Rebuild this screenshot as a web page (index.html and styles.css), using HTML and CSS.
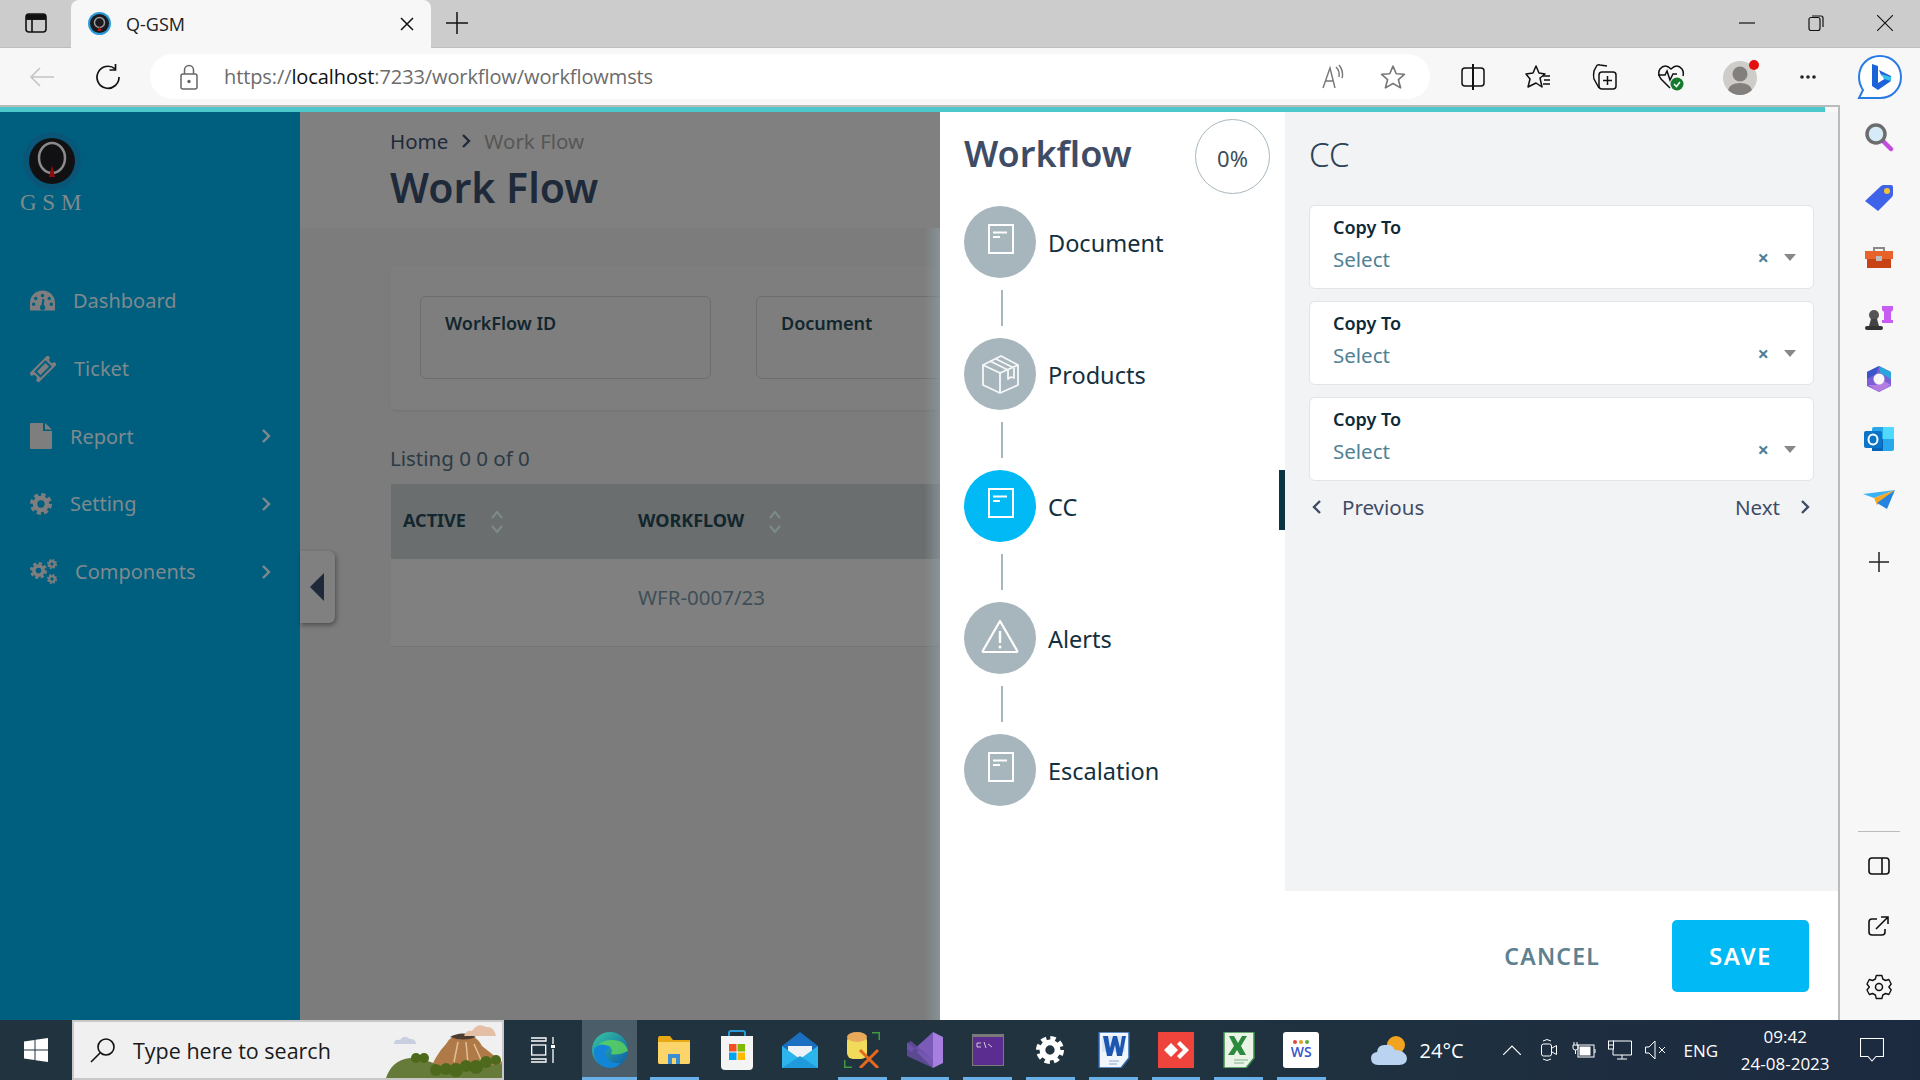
FILE: index.html
```html
<!DOCTYPE html>
<html lang="en">
<head>
    <meta charset="UTF-8">
    <title>Q-GSM</title>
    <link rel="stylesheet" href="styles.css">
</head>
<body>
    <svg class="sprites" width="0" height="0">
        <symbol id="doc" viewBox="0 0 72 72">
            <rect x="25" y="19" width="24" height="28" fill="none" stroke="#fff" stroke-width="2"/>
            <path d="M29 26.5h14M29 31h7" stroke="#fff" stroke-width="2" fill="none"/>
        </symbol>
        <symbol id="box" viewBox="0 0 72 72">
            <g fill="none" stroke="#fff" stroke-width="1.8" stroke-linejoin="round" opacity=".9">
                <path d="M19 27 36 35 54 27V47L36 55 19 47Z"/>
                <path d="M19 27 37 18 54 27M36 35V55"/>
                <path d="M26 23 44 32M31 20.5 49 29.500M44 32V41L47 39 50 40V30"/>
            </g>
        </symbol>
        <symbol id="alert" viewBox="0 0 72 72">
            <path d="M36 19 53 48.500Q54 50 52 50H20Q18 50 19 48.500Z" fill="none" stroke="#fff" stroke-width="2.200" stroke-linejoin="round"/>
            <path d="M36 29V41" stroke="#fff" stroke-width="2.400"/>
            <circle cx="36" cy="45" r="1.500" fill="#fff"/>
        </symbol>
        <symbol id="chev" viewBox="0 0 10 16">
            <path d="M2 2 8 8 2 14" fill="none" stroke="currentColor" stroke-width="2.400"/>
        </symbol>
        <symbol id="sort" viewBox="0 0 14 26">
            <path d="M2 9 7 3 12 9M2 17 7 23 12 17" fill="none" stroke="#7d8b8b" stroke-width="2"/>
        </symbol>
        <symbol id="cog" viewBox="0 0 24 24">
            <circle cx="12" cy="12" r="10" fill="none" stroke="currentColor" stroke-width="4" stroke-dasharray="4.500 3.350"/>
            <circle cx="12" cy="12" r="6.500" fill="none" stroke="currentColor" stroke-width="5"/>
        </symbol>
    </svg>

    <!-- browser tabs -->
    <div class="tabstrip">
        <span class="tabstrip-btn">
            <svg width="24" height="24" viewBox="0 0 24 24" fill="none" stroke="#111" stroke-width="1.600"><rect x="2" y="3" width="20" height="18" rx="3"/><path d="M2 8h20M8 8v13"/><path d="M3 4h18v4H3z" fill="#111"/></svg>
        </span>
        <div class="tab">
            <svg class="tab-favicon" width="23" height="23" viewBox="0 0 23 23">
                <circle cx="11.500" cy="11.500" r="11.500" fill="#2a9ad8"/>
                <circle cx="11.500" cy="11.500" r="9.500" fill="#1b1b1f"/>
                <circle cx="11.500" cy="10.500" r="5" fill="none" stroke="#9a9a9a" stroke-width="1.500"/>
                <path d="M11.500 14 13.500 19H9.500Z" fill="#c01818"/>
            </svg>
            <span class="tab-title">Q-GSM</span>
            <svg class="tab-close" width="14" height="14" viewBox="0 0 14 14"><path d="M1 1 13 13M13 1 1 13" stroke="#111" stroke-width="1.500"/></svg>
        </div>
        <svg class="tab-new" width="22" height="22" viewBox="0 0 22 22"><path d="M11 0V22M0 11H22" stroke="#111" stroke-width="1.500"/></svg>
        <div class="win-controls">
            <svg width="16" height="16" viewBox="0 0 16 16"><path d="M0 8H16" stroke="#111" stroke-width="1.200"/></svg>
            <svg width="16" height="16" viewBox="0 0 16 16" fill="none" stroke="#111" stroke-width="1.200"><rect x="1" y="2.500" width="11" height="13" rx="2"/><path d="M4 1H13Q15 1 15 3V12"/></svg>
            <svg width="16" height="16" viewBox="0 0 16 16"><path d="M0 0 16 16M16 0 0 16" stroke="#111" stroke-width="1.100"/></svg>
        </div>
    </div>

    <!-- address bar -->
    <div class="toolbar">
        <svg class="tool-back" width="26" height="22" viewBox="0 0 26 22" fill="none" stroke="#c4c4c4" stroke-width="1.600"><path d="M25 11H2M11 2 2 11 11 20"/></svg>
        <svg class="tool-reload" width="26" height="26" viewBox="0 0 26 26" fill="none" stroke="#111" stroke-width="1.700"><path d="M20 4.800A11 11 0 1 0 24 13"/><path d="M20.500 0V6H14.500"/></svg>
        <div class="addressbar">
            <svg width="20" height="26" viewBox="0 0 20 26" fill="none" stroke="#666" stroke-width="1.500"><rect x="2" y="10" width="16" height="15" rx="2"/><path d="M5.500 10V6a4.500 4.500 0 0 1 9 0V10"/><circle cx="10" cy="17.500" r="1" fill="#333"/></svg>
            <span class="url">https://<b>localhost</b>:7233/workflow/workflowmsts</span>
            <svg class="url-read" width="26" height="26" viewBox="0 0 26 26" fill="none" stroke="#777" stroke-width="1.400"><path d="M2 24 9 4 14 24M4.500 17H12.500"/><path d="M15 3Q19 7 18 13M18 1Q23 7 21 14"/></svg>
            <svg class="url-star" width="26" height="26" viewBox="0 0 24 24" fill="none" stroke="#777" stroke-width="1.500" stroke-linejoin="round"><path d="M12 2 15 9 22.500 9.500 17 14.500 19 22 12 18 5 22 7 14.500 1.500 9.500 9 9Z"/></svg>
        </div>
        <div class="tool-icons">
            <svg width="24" height="26" viewBox="0 0 24 26" fill="none" stroke="#111" stroke-width="1.500"><rect x="1" y="4" width="22" height="18" rx="3"/><path d="M12 0V26" stroke-width="2"/></svg>
            <svg width="26" height="26" viewBox="0 0 26 26" fill="none" stroke="#111" stroke-width="1.500" stroke-linejoin="round"><path d="M11 2 14 9 20 10 15 14 17 23 11 19 3 23 5 15 1 10 8 9Z"/><path d="M18 12H25M19 16H25M18 20H25"/></svg>
            <svg width="26" height="28" viewBox="0 0 26 28" fill="none" stroke="#111" stroke-width="1.500"><path d="M8 25 3 16Q2 13 3 8L5 4Q6 1 9 2L16 3"/><rect x="8" y="9" width="17" height="17" rx="3"/><path d="M16.500 13V22M12 17.500H21"/></svg>
            <svg width="28" height="28" viewBox="0 0 28 28" fill="none" stroke="#111" stroke-width="1.500"><path d="M13 25 4 16Q0 11 3 6 8 0 14 6 20 0 25 6 27 9 26 13"/><path d="M1 12H8L10 8 13 17 16 11H20"/><circle cx="20" cy="21" r="6.500" fill="#137a2c" stroke="none"/><path d="M17 21 19.500 23.500 23 19" stroke="#fff"/></svg>
            <svg class="avatar" width="38" height="36" viewBox="0 0 38 36"><circle cx="18" cy="19" r="17" fill="#cfcdca"/><circle cx="18" cy="15" r="7.500" fill="#827f7c"/><path d="M6 31Q8 24 18 24 28 24 30 31 25 36 18 36 11 36 6 31Z" fill="#827f7c"/><circle cx="32" cy="6" r="5" fill="#e60f0f"/></svg>
            <svg width="16" height="4" viewBox="0 0 16 4" fill="#222"><circle cx="2" cy="2" r="1.800"/><circle cx="8" cy="2" r="1.800"/><circle cx="14" cy="2" r="1.800"/></svg>
            <svg class="bing" width="46" height="46" viewBox="0 0 46 46">
                <path d="M23 2C35 2 44 11 44 23S35 44 23 44H2L6 36Q2 30 2 23C2 11 11 2 23 2Z" fill="#fff" stroke="#2a7be4" stroke-width="2"/>
                <path d="M15 10 21 12V29L29 24 24 21 22 16 34 22V27L21 36 15 32Z" fill="#1c63d9"/>
                <path d="M24 20 34 23V27L27 25Z" fill="#35c0ea"/>
            </svg>
        </div>
    </div>

    <div class="viewport">
        <div class="browser-page">
            <div class="top-progress"></div>
            <div class="app">
                <aside class="sidebar">
                    <div class="logo">
                        <svg width="58" height="58" viewBox="0 0 58 58">
                            <circle cx="29" cy="29" r="29" fill="#0a5678"/>
                            <circle cx="29" cy="29" r="23" fill="#111114"/>
                            <ellipse cx="29" cy="26" rx="13" ry="15" fill="none" stroke="#8b8b8b" stroke-width="2.500"/>
                            <path d="M29 33 32 45H26Z" fill="#8d0c0c"/>
                        </svg>
                        <div class="logo-text">G S M</div>
                    </div>
                    <nav class="menu">
                        <a class="menu-row">
                            <svg width="25" height="22" viewBox="0 0 26 22"><path fill-rule="evenodd" d="M13 0A13 13 0 0 0 0 13V20Q0 21 1 21H25Q26 21 26 20V13A13 13 0 0 0 13 0ZM13 3.500a1.800 1.800 0 1 1 0 3.600 1.800 1.800 0 0 1 0-3.600ZM6 6.500a1.800 1.800 0 1 1 0 3.600 1.800 1.800 0 0 1 0-3.600ZM20 6.500a1.800 1.800 0 1 1 0 3.600 1.800 1.800 0 0 1 0-3.600ZM3.800 12.500a1.800 1.800 0 1 1 0 3.600 1.800 1.800 0 0 1 0-3.600ZM22.200 12.500a1.800 1.800 0 1 1 0 3.600 1.800 1.800 0 0 1 0-3.600ZM15 9 14.300 15.200a2.800 2.800 0 1 1-2.400 0L13 9Z" fill="#7e7e7e"/></svg>
                            <span>Dashboard</span>
                        </a>
                        <a class="menu-row">
                            <svg width="26" height="26" viewBox="0 0 26 26">
                                <g transform="rotate(-45 13 13)">
                                    <path d="M0 6.500H26V10a3 3 0 0 0 0 6V19.500H0V16a3 3 0 0 0 0-6Z" fill="#7e7e7e"/>
                                    <rect x="6" y="9.500" width="14" height="7" fill="none" stroke="#005f7f" stroke-width="2"/>
                                </g>
                            </svg>
                            <span>Ticket</span>
                        </a>
                        <a class="menu-row">
                            <svg width="22" height="26" viewBox="0 0 22 26"><path d="M1 0H13V8H22V25Q22 26 21 26H1Q0 26 0 25V1Q0 0 1 0ZM15 0 22 6.500H15Z" fill="#7e7e7e"/></svg>
                            <span>Report</span>
                            <svg class="menu-chev" width="10" height="16"><use href="#chev"/></svg>
                        </a>
                        <a class="menu-row">
                            <svg class="menu-cog" width="22" height="22"><use href="#cog"/></svg>
                            <span>Setting</span>
                            <svg class="menu-chev" width="10" height="16"><use href="#chev"/></svg>
                        </a>
                        <a class="menu-row">
                            <svg class="menu-cogs" width="27" height="25" viewBox="0 0 27 25">
                                <use href="#cog" x="0" y="3" width="17" height="17"/>
                                <use href="#cog" x="17" y="0" width="10" height="10"/>
                                <use href="#cog" x="17" y="15" width="10" height="10"/>
                            </svg>
                            <span>Components</span>
                            <svg class="menu-chev" width="10" height="16"><use href="#chev"/></svg>
                        </a>
                    </nav>
                </aside>

                <main class="page">
                    <div class="page-head">
                        <div class="breadcrumb">
                            <span>Home</span>
                            <svg width="10" height="16"><use href="#chev"/></svg>
                            <span class="crumb-current">Work Flow</span>
                        </div>
                        <h1>Work Flow</h1>
                    </div>
                    <div class="page-body">
                        <div class="filter-card">
                            <div class="filter-field">WorkFlow ID</div>
                            <div class="filter-field">Document</div>
                        </div>
                        <p class="listing">Listing 0 0 of 0</p>
                        <table class="grid">
                            <thead>
                                <tr>
                                    <th class="col-active">ACTIVE<svg width="14" height="26"><use href="#sort"/></svg></th>
                                    <th>WORKFLOW<svg width="14" height="26"><use href="#sort"/></svg></th>
                                </tr>
                            </thead>
                            <tbody>
                                <tr>
                                    <td></td>
                                    <td>WFR-0007/23</td>
                                </tr>
                            </tbody>
                        </table>
                    </div>
                </main>

                <button class="collapse-btn"><span class="collapse-arrow"></span></button>

                <section class="drawer">
                    <div class="drawer-body">
                        <div class="stepper">
                            <div class="stepper-head">
                                <h2>Workflow</h2>
                                <div class="progress-ring">0%</div>
                            </div>
                            <div class="step">
                                <span class="step-icon"><svg width="72" height="72"><use href="#doc"/></svg></span>
                                <span class="step-label">Document</span>
                            </div>
                            <div class="step-line"></div>
                            <div class="step">
                                <span class="step-icon"><svg width="72" height="72"><use href="#box"/></svg></span>
                                <span class="step-label">Products</span>
                            </div>
                            <div class="step-line"></div>
                            <div class="step active">
                                <span class="step-icon"><svg width="72" height="72"><use href="#doc"/></svg></span>
                                <span class="step-label">CC</span>
                            </div>
                            <div class="step-line"></div>
                            <div class="step">
                                <span class="step-icon"><svg width="72" height="72"><use href="#alert"/></svg></span>
                                <span class="step-label">Alerts</span>
                            </div>
                            <div class="step-line"></div>
                            <div class="step">
                                <span class="step-icon"><svg width="72" height="72"><use href="#doc"/></svg></span>
                                <span class="step-label">Escalation</span>
                            </div>
                        </div>
                        <div class="step-form">
                            <h3>CC</h3>
                            <div class="select-field">
                                <label>Copy To</label>
                                <div class="select-row"><span>Select</span><i class="clear">×</i><i class="caret"></i></div>
                            </div>
                            <div class="select-field">
                                <label>Copy To</label>
                                <div class="select-row"><span>Select</span><i class="clear">×</i><i class="caret"></i></div>
                            </div>
                            <div class="select-field">
                                <label>Copy To</label>
                                <div class="select-row"><span>Select</span><i class="clear">×</i><i class="caret"></i></div>
                            </div>
                            <div class="pager">
                                <a><svg class="flip" width="10" height="16"><use href="#chev"/></svg>Previous</a>
                                <a>Next<svg width="10" height="16"><use href="#chev"/></svg></a>
                            </div>
                        </div>
                    </div>
                    <div class="drawer-foot">
                        <button class="btn-cancel">CANCEL</button>
                        <button class="btn-save">SAVE</button>
                    </div>
                </section>
            </div>
        </div>

        <!-- edge sidebar -->
        <div class="rail">
            <span class="rail-slot"><svg width="30" height="30" viewBox="0 0 30 30"><path d="M18 18 27 27" stroke="#c24ce0" stroke-width="4.500" stroke-linecap="round"/><circle cx="12" cy="12" r="9" fill="#d5ecf8" stroke="#6d6d6d" stroke-width="3.500"/></svg></span>
            <span class="rail-slot"><svg width="30" height="30" viewBox="0 0 30 30"><path d="M1 18 17 3Q18 2 20 2H27Q29 2 29 4V11Q29 13 28 14L14 28Z" fill="#3f63e8"/><circle cx="23" cy="8" r="3" fill="#f3c331"/></svg></span>
            <span class="rail-slot"><svg width="30" height="26" viewBox="0 0 30 26"><path d="M10 7V3H20V7" fill="none" stroke="#8a8a8a" stroke-width="2"/><rect x="1" y="6" width="28" height="8" fill="#e8632a"/><rect x="3" y="14" width="24" height="9" fill="#c84314"/><rect x="12" y="11" width="6" height="5" fill="#bbb"/></svg></span>
            <span class="rail-slot"><svg width="30" height="28" viewBox="0 0 30 28"><circle cx="10" cy="11" r="5" fill="#555"/><path d="M7 15H13L15 22H5Z" fill="#444"/><rect x="1" y="22" width="18" height="4" rx="2" fill="#333"/><path d="M18 2H29V6L27 8V16H29V19H18V16H20V8L18 6Z" fill="#c85cf2"/></svg></span>
            <span class="rail-slot"><svg width="30" height="30" viewBox="0 0 30 30"><path d="M15 2 27 8V22L15 28 3 22V8Z" fill="#7a5fd8"/><path d="M15 2 27 8V15L16 9Z" fill="#2aa6dc"/><path d="M3 8 15 2 12 10 3 15Z" fill="#3a55c8"/><path d="M4 21 15 28 27 21 20 17 12 21Z" fill="#b57ce0"/><circle cx="15" cy="15" r="5.500" fill="#f7f7f7"/></svg></span>
            <span class="rail-slot"><svg width="30" height="28" viewBox="0 0 30 28"><rect x="8" y="2" width="22" height="24" rx="2" fill="#28a8ea"/><rect x="19" y="2" width="11" height="12" fill="#50d9ff"/><rect x="8" y="14" width="11" height="12" fill="#0364b8"/><rect x="0" y="6" width="18" height="17" rx="2" fill="#0a74c8"/><ellipse cx="9" cy="14.500" rx="4.500" ry="5" fill="none" stroke="#fff" stroke-width="2"/></svg></span>
            <span class="rail-slot"><svg width="32" height="22" viewBox="0 0 32 22"><path d="M0 5 32 1 11 9Z" fill="#3db2f2"/><path d="M11 9 32 1 14 16Z" fill="#f5a623"/><path d="M32 1 24 20 14 14Z" fill="#2484e0"/></svg></span>
            <span class="rail-slot rail-add"><svg width="20" height="20" viewBox="0 0 20 20"><path d="M10 0V20M0 10H20" stroke="#222" stroke-width="1.500"/></svg></span>
            <div class="rail-spacer"></div>
            <div class="rail-divider"></div>
            <span class="rail-slot"><svg width="22" height="18" viewBox="0 0 22 18" fill="none" stroke="#111" stroke-width="1.600"><rect x="1" y="1" width="20" height="16" rx="3"/><path d="M14 1V17"/></svg></span>
            <span class="rail-slot"><svg width="22" height="22" viewBox="0 0 22 22" fill="none" stroke="#111" stroke-width="1.600"><path d="M9 4H4Q1 4 1 7V17Q1 20 4 20H14Q17 20 17 17V14"/><path d="M8 14 20 2M13 2H20V9"/></svg></span>
            <span class="rail-slot"><svg width="26" height="26" viewBox="0 0 26 26" fill="none" stroke="#111" stroke-width="1.500" stroke-linejoin="round"><path d="M10 1.500H16L17 5 20 6.500 23.500 5.500 26 10 23.500 13 26 16 23.500 20.500 20 19.500 17 21 16 24.500H10L9 21 6 19.500 2.500 20.500 0 16 2.500 13 0 10 2.500 5.500 6 6.500 9 5Z" transform="translate(1 0) scale(.93 1)"/><circle cx="13" cy="13" r="3.500"/></svg></span>
        </div>
    </div>

    <!-- windows taskbar -->
    <footer class="taskbar">
        <span class="start">
            <svg width="24" height="24" viewBox="0 0 24 24" fill="#fff"><path d="M0 3.500 10.500 2V11.500H0ZM11.500 1.800 24 0V11.500H11.500ZM0 12.500H10.500V22L0 20.500ZM11.500 12.500H24V24L11.500 22.200Z"/></svg>
        </span>
        <div class="search">
            <svg width="26" height="26" viewBox="0 0 26 26" fill="none" stroke="#111" stroke-width="1.600"><circle cx="16" cy="10" r="8"/><path d="M10 16 1 25"/></svg>
            <span>Type here to search</span>
            <svg class="search-art" width="116" height="56" viewBox="0 0 116 56">
                <path d="M40 56Q50 32 60 22 66 12 76 12 90 12 96 24L116 40V56Z" fill="#b07a48"/>
                <path d="M64 15Q76 8 90 15 78 20 64 15Z" fill="#4d3d30"/>
                <path d="M72 20 68 40M80 20 82 42M88 22 96 40" stroke="#e3bf94" stroke-width="1.500"/>
                <path d="M0 56Q6 38 24 36 40 36 52 44L100 44 116 42V56Z" fill="#667a3a"/>
                <g fill="#4d6a1c">
                    <circle cx="30" cy="36" r="5"/><circle cx="38" cy="36" r="5"/><circle cx="50" cy="48" r="6"/><circle cx="60" cy="47" r="6"/><circle cx="70" cy="48" r="7"/><circle cx="80" cy="44" r="6"/><circle cx="90" cy="45" r="7"/><circle cx="100" cy="40" r="6"/><circle cx="110" cy="38" r="5"/>
                </g>
                <path d="M8 22Q8 17 14 18 18 12 24 17 30 17 30 22Z" fill="#c8cfe0"/>
                <path d="M78 14Q80 8 86 9 92 0 100 5 108 4 110 14Z" fill="#e4bfa6"/>
            </svg>
        </div>
        <span class="taskview">
            <svg width="24" height="26" viewBox="0 0 24 26" fill="none" stroke="#fff" stroke-width="1.300"><path d="M0 1H15V4H0M0 25H15V22H0"/><rect x="0.700" y="8" width="14" height="10"/><path d="M22 0V7M22 12V26"/><rect x="20" y="8" width="4" height="3" fill="#fff" stroke="none"/></svg>
        </span>
        <div class="task-apps">
            <span class="task-app current">
                <svg width="36" height="36" viewBox="0 0 36 36"><defs><linearGradient id="edge" x1="0" y1="0" x2="1" y2="1"><stop offset="0" stop-color="#36c7a0"/><stop offset="1" stop-color="#0b58a8"/></linearGradient></defs><circle cx="18" cy="18" r="18" fill="url(#edge)"/><path d="M36 19Q33 8 20 8 6 8 3 20 8 12 15 14 22 16 19 22 26 24 36 19Z" fill="#5ed55a" opacity=".8"/><path d="M2 17Q1 32 16 36 26 36 28 31 16 32 14 24 13 18 19 15 8 9 2 17Z" fill="#1285d8"/></svg>
            </span>
            <span class="task-app running">
                <svg width="32" height="28" viewBox="0 0 32 28"><path d="M0 2Q0 0 2 0H12L15 4H32V26Q32 28 30 28H2Q0 28 0 26Z" fill="#e8a917"/><path d="M0 6H32V26Q32 28 30 28H2Q0 28 0 26Z" fill="#fbd56a"/><path d="M10 18V28H14V22H18V28H22V18Z" fill="#3a8fd4"/></svg>
            </span>
            <span class="task-app">
                <svg width="36" height="40" viewBox="0 0 36 40"><path d="M10 8V3Q10 1 12 1H24Q26 1 26 3V8" fill="none" stroke="#2a9ad8" stroke-width="2"/><path d="M2 6H34V36Q34 40 30 40H6Q2 40 2 36Z" fill="#f4f4f4"/><rect x="10" y="14" width="7.500" height="7.500" fill="#f25022"/><rect x="18.500" y="14" width="7.500" height="7.500" fill="#7fba00"/><rect x="10" y="22.500" width="7.500" height="7.500" fill="#00a4ef"/><rect x="18.500" y="22.500" width="7.500" height="7.500" fill="#ffb900"/></svg>
            </span>
            <span class="task-app">
                <svg width="36" height="36" viewBox="0 0 36 36"><path d="M0 14 18 0 36 14V36H0Z" fill="#1a6fc0"/><path d="M6 14H30V22L18 27 6 22Z" fill="#eef2f6"/><path d="M0 14 18 27 36 14V36H0Z" fill="#2cb5ec"/><path d="M0 36 18 24 36 36Z" fill="#1f9bdc"/></svg>
            </span>
            <span class="task-app running">
                <svg width="36" height="36" viewBox="0 0 36 36"><rect x="3" y="3" width="20" height="24" rx="6" fill="#f0dc5a"/><ellipse cx="13" cy="5" rx="10" ry="5" fill="#e8aa5a"/><path d="M0 28V36H8M28 0H36V8" fill="none" stroke="#3f9a40" stroke-width="3"/><path d="M16 18 34 36M34 18 16 36" stroke="#e8691c" stroke-width="3"/></svg>
            </span>
            <span class="task-app running">
                <svg width="36" height="36" viewBox="0 0 36 36"><path d="M26 0 36 5V31L26 36 10 20 26 8Z" fill="#a67fe0"/><path d="M26 0 4 20 0 17 V11L26 28Z" fill="#7a5bb8"/><path d="M0 11 4 9 26 28V36L0 24Z" fill="#6a4fa6" opacity=".8"/></svg>
            </span>
            <span class="task-app running">
                <svg width="32" height="32" viewBox="0 0 32 32"><rect width="32" height="32" fill="#7a7a7a"/><rect x="1" y="3" width="30" height="28" fill="#5c2d91"/><path d="M5 9H9M5 9V13H9M12 8 14 14M16 10 20 13" stroke="#ccc" fill="none"/></svg>
            </span>
            <span class="task-app running">
                <svg width="28" height="28" class="task-cog"><use href="#cog"/></svg>
            </span>
            <span class="task-app running">
                <svg width="33" height="36" viewBox="0 0 33 36"><path d="M2 0H32V26L24 36H2Z" fill="#f2f6fb" stroke="#2c66b4" stroke-width="1.500"/><path d="M5 4H28V20H5Z" fill="#d8e6f6"/><path d="M6 4H11L13 16 16 4H20L23 16 25 4H29L25 24H20L18 13 15 24H10Z" fill="#1c56b0"/><path d="M12 29H22M12 32H20" stroke="#8aa8d0"/></svg>
            </span>
            <span class="task-app running">
                <svg width="36" height="36" viewBox="0 0 36 36"><rect width="36" height="36" fill="#ef443b"/><path d="M10 11 17 18 10 25 3 18ZM19 9 28 18 19 27 16 24 22 18 16 12Z" fill="#fff" transform="translate(3 0)"/></svg>
            </span>
            <span class="task-app running">
                <svg width="33" height="36" viewBox="0 0 33 36"><path d="M2 0H32V26L24 36H2Z" fill="#e9f3e6" stroke="#3b8f47" stroke-width="1.500"/><path d="M7 4H12L16 11 20 4H25L19 14 24 23H18L15 18 12 23H6L12 14Z" fill="#2c8a3c"/><path d="M12 28H26M12 31H22" stroke="#7fb08a"/></svg>
            </span>
            <span class="task-app running">
                <span class="ws-icon">
                    <span class="ws-dots"><i></i><i></i><i></i></span>
                    <span class="ws-text">WS</span>
                </span>
            </span>
        </div>
        <div class="tray">
            <span class="weather">
                <svg width="36" height="30" viewBox="0 0 36 30"><circle cx="25" cy="10" r="9" fill="#f2a31f"/><path d="M7 30Q0 30 0 23 0 18 6 17 7 9 15 10 21 9 24 15 34 15 36 23 36 30 28 30Z" fill="#b9d3f0"/></svg>
                24°C
            </span>
            <svg class="tray-up" width="18" height="10" viewBox="0 0 18 10" fill="none" stroke="#fff" stroke-width="1.200"><path d="M0 10 9 1 18 10"/></svg>
            <svg class="tray-cam" width="16" height="24" viewBox="0 0 16 24" fill="none" stroke="#fff" stroke-width="1"><rect x="0.500" y="6" width="10" height="12" rx="2"/><path d="M11 10 15.500 7.500V16.500L11 14M2 3Q6 0 10 3M2 21Q6 24 10 21"/></svg>
            <svg class="tray-bat" width="24" height="16" viewBox="0 0 24 16" fill="none" stroke="#fff" stroke-width="1"><rect x="6" y="3" width="16" height="12"/><rect x="8" y="5" width="10" height="8" fill="#fff"/><path d="M23 7V11M2 0V3M5 0V3M1 3H6V6Q6 8 3.500 8 1 8 1 6ZM3.500 8V12"/></svg>
            <svg class="tray-net" width="24" height="20" viewBox="0 0 24 20" fill="none" stroke="#fff" stroke-width="1"><path d="M5 1H23.500V15H5V9"/><rect x="0.500" y="1" width="5" height="8"/><path d="M14 15V19M9 19H19M1 5H5"/></svg>
            <svg class="tray-vol" width="21" height="20" viewBox="0 0 21 20" fill="none" stroke="#fff" stroke-width="1"><path d="M0.500 7H4L10 1V19L4 13H0.500ZM14 7 20 13M20 7 14 13"/></svg>
            <span class="tray-lang">ENG</span>
            <span class="clock"><span>09:42</span><span>24-08-2023</span></span>
            <svg class="tray-note" width="24" height="24" viewBox="0 0 24 24" fill="none" stroke="#fff" stroke-width="1.100"><path d="M0.500 0.500H23.500V18.500H16L12 23 8 18.500H0.500Z"/></svg>
        </div>
    </footer>
</body>
</html>
```

FILE: styles.css
```css
* {
    box-sizing: border-box;
}
html, body {
    margin: 0;
    padding: 0;
}
body {
    width: 1920px;
    height: 1080px;
    overflow: hidden;
    display: flex;
    flex-direction: column;
    font-family: 'Noto Sans', sans-serif;
    background-color: #f7f7f7;
}
.sprites {
    position: absolute;
}

/* browser chrome */
.tabstrip {
    height: 48px;
    flex: none;
    display: flex;
    align-items: center;
    background-color: #cccccc;
    border-bottom: 1px solid #bdbdbd;
}
.tabstrip-btn {
    width: 71px;
    display: flex;
    justify-content: center;
    margin-top: -2px;
}
.tab {
    width: 360px;
    height: 48px;
    display: flex;
    align-items: center;
    background-color: #f7f7f7;
    border-radius: 8px 8px 0 0;
    padding: 0 17px;
}
.tab-favicon {
    margin-right: 15px;
}
.tab-title {
    font-family: 'Open Sans', sans-serif;
    font-size: 18px;
    color: #222;
    flex: 1;
}
.tab-new {
    margin-left: 15px;
    margin-top: -2px;
}
.win-controls {
    margin-left: auto;
    display: flex;
    gap: 53px;
    padding-right: 27px;
    margin-top: -2px;
}
.toolbar {
    height: 57px;
    flex: none;
    display: flex;
    align-items: center;
    background-color: #f7f7f7;
}
.tool-back {
    margin-left: 29px;
}
.tool-reload {
    margin-left: 40px;
}
.addressbar {
    width: 1280px;
    flex: none;
    height: 45px;
    margin-left: 29px;
    background-color: #fff;
    border-radius: 23px;
    display: flex;
    align-items: center;
    padding-left: 29px;
}
.url {
    font-family: 'Open Sans', sans-serif;
    font-size: 20px;
    color: #6b6b6b;
    margin-left: 25px;
    letter-spacing: -0.1px;
}
.url b {
    font-weight: 400;
    color: #111;
}
.url-read {
    margin-left: auto;
}
.url-star {
    margin-left: 33px;
    margin-right: 24px;
}
.tool-icons {
    flex: 1;
    display: flex;
    align-items: center;
    padding-left: 31px;
    gap: 40px;
}
.tool-icons .avatar {
    margin-left: -3px;
}
.tool-icons .bing {
    margin-left: 1px;
}

/* page in the browser */
.viewport {
    flex: 1;
    min-height: 0;
    display: flex;
}
.browser-page {
    width: 1840px;
    display: flex;
    flex-direction: column;
    border-top: 2px solid #bbbbbb;
    border-right: 2px solid #bbbbbb;
    background-color: #f7f7f7;
}
.top-progress {
    width: 1825px;
    height: 5px;
    flex: none;
    background-color: #4cc8cc;
}
.app {
    flex: 1;
    min-height: 0;
    display: flex;
    position: relative;
    overflow: hidden;
}

/* left menu, dimmed by the drawer backdrop */
.sidebar {
    width: 300px;
    flex: none;
    background-color: #005f7f;
    color: #7e8a8e;
}
.logo {
    padding: 20px 0 0 23px;
    height: 100px;
}
.logo svg {
    display: block;
}
.logo-text {
    font-family: 'Liberation Serif', serif;
    font-size: 23px;
    line-height: 22px;
    color: #7f8a8d;
    margin: 2px 0 0 -3px;
}
.menu {
    margin-top: 55px;
}
.menu-row {
    height: 67.700px;
    display: flex;
    align-items: center;
    gap: 18px;
    padding: 0 29px 0 30px;
    font-size: 20px;
}
.menu-chev {
    margin-left: auto;
}
.menu-cog, .menu-cogs {
    color: #7e7e7e;
}
.page {
    flex: 1;
    min-width: 0;
    background-color: #7b7c7b;
    overflow: hidden;
}
.page-head {
    height: 116px;
    padding: 15px 0 0 90px;
    background-color: #808080;
}
.breadcrumb {
    display: flex;
    align-items: center;
    gap: 13px;
    font-size: 20.500px;
    line-height: 28px;
    color: #1f2a3a;
}
.crumb-current {
    color: #565656;
}
h1 {
    margin: 7px 0 0;
    font-size: 41px;
    line-height: 50px;
    font-weight: 600;
    color: #1e2a3a;
}
.page-body {
    padding: 38px 0 0 90px;
}
.filter-card {
    width: 1200px;
    height: 144px;
    padding: 30px;
    display: flex;
    gap: 45px;
    background-color: #7e7e7e;
    border-radius: 6px;
    box-shadow: 0 1px 2px rgba(0, 0, 0, 0.08);
}
.filter-field {
    width: 291px;
    height: 83px;
    padding: 13px 24px;
    border: 1px solid #6c6e6c;
    border-radius: 6px;
    font-size: 18px;
    font-weight: 600;
    line-height: 26px;
    color: #12262e;
}
.listing {
    margin: 34px 0 12px;
    font-size: 20.500px;
    line-height: 28px;
    color: #2d3a45;
}
.grid {
    width: 1100px;
    margin-left: 1px;
    table-layout: fixed;
    border-collapse: collapse;
}
.grid th {
    height: 75px;
    padding: 0 0 0 12px;
    text-align: left;
    font-size: 18px;
    font-weight: 700;
    color: #12262e;
    background-color: #6a6e6e;
}
.grid th.col-active {
    width: 235px;
}
.grid th svg {
    vertical-align: middle;
    margin-left: 24px;
}
.grid td {
    height: 87px;
    padding: 0 0 10px 12px;
    font-size: 20.500px;
    color: #3f4f58;
    background-color: #808080;
    border-bottom: 1px solid #747474;
}
.collapse-btn {
    position: absolute;
    left: 300px;
    top: 439px;
    width: 35px;
    height: 72px;
    padding: 0 0 0 10px;
    border: 0;
    border-radius: 0 6px 6px 0;
    background-color: #808080;
    box-shadow: 1px 2px 5px rgba(0, 0, 0, 0.4);
    display: flex;
    align-items: center;
}
.collapse-arrow {
    border-style: solid;
    border-width: 14px 14px 14px 0;
    border-color: transparent #1e2a3a transparent transparent;
}

/* workflow drawer */
.drawer {
    position: absolute;
    left: 940px;
    top: 0;
    right: 0;
    bottom: 0;
    display: flex;
    flex-direction: column;
    background-color: #fff;
}
.drawer::before {
    content: '';
    position: absolute;
    left: -16px;
    top: 116px;
    bottom: 0;
    width: 16px;
    background-image: linear-gradient(to right, rgba(140, 155, 160, 0), rgba(140, 155, 160, 0.7));
}
.drawer-body {
    height: 779px;
    flex: none;
    display: flex;
}
.stepper {
    width: 345px;
    flex: none;
    padding: 7px 0 0 24px;
}
.stepper-head {
    display: flex;
    justify-content: space-between;
    padding-right: 15px;
    margin-bottom: 12px;
}
h2 {
    margin: 10px 0 0;
    font-size: 36px;
    line-height: 50px;
    font-weight: 600;
    color: #3f4c66;
}
.progress-ring {
    width: 75px;
    height: 75px;
    border: 1px solid #a8b8bf;
    border-radius: 50%;
    display: flex;
    align-items: center;
    justify-content: center;
    padding-top: 2px;
    font-size: 22px;
    color: #3c4e5c;
}
.step {
    display: flex;
    align-items: center;
    gap: 12px;
    position: relative;
}
.step-icon {
    width: 72px;
    height: 72px;
    border-radius: 50%;
    background-color: #a7b6bc;
    display: block;
}
.step-icon svg {
    display: block;
}
.step.active .step-icon {
    background-color: #00b9f5;
}
.step.active::after {
    content: '';
    position: absolute;
    right: 0;
    top: 0;
    width: 6px;
    height: 60px;
    background-color: #0b3442;
}
.step-label {
    font-size: 23.500px;
    line-height: 32px;
    margin-top: 2px;
    color: #123040;
}
.step-line {
    width: 2px;
    height: 36px;
    margin: 12px 0 12px 37px;
    background-color: #a7b7be;
}
.step-form {
    flex: 1;
    padding: 21px 24px 0 24px;
    background-color: #f2f3f5;
}
h3 {
    margin: 0 0 28px;
    font-size: 33px;
    line-height: 44px;
    font-weight: 300;
    color: #2d4257;
}
.select-field {
    height: 84px;
    margin-bottom: 12px;
    padding: 9px 17px 0 23px;
    background-color: #fff;
    border: 1px solid #e2e4e8;
    border-radius: 6px;
}
.select-field label {
    display: block;
    font-size: 18px;
    font-weight: 600;
    line-height: 24px;
    color: #0e2a38;
}
.select-row {
    margin-top: 6px;
    display: flex;
    align-items: center;
    font-size: 20.500px;
    line-height: 28px;
    color: #4f8195;
}
.select-row span {
    flex: 1;
}
.clear {
    font-style: normal;
    font-weight: 700;
    font-size: 20px;
    line-height: 20px;
    margin-top: -2px;
}
.caret {
    margin: -4px 0 0 15px;
    border-style: solid;
    border-width: 7px 6px 0;
    border-color: #888 transparent transparent;
}
.pager {
    margin-top: -14px;
    padding: 14px 4px 0 3px;
    display: flex;
    justify-content: space-between;
    font-size: 20.500px;
    line-height: 28px;
    color: #3f4c66;
}
.pager a {
    display: flex;
    align-items: center;
    gap: 20px;
}
.flip {
    transform: scaleX(-1);
}
.drawer-foot {
    flex: 1;
    display: flex;
    align-items: center;
    justify-content: flex-end;
    gap: 72px;
    padding: 0 29px 0 0;
}
.drawer-foot button {
    border: 0;
    background: none;
    font-family: inherit;
    font-size: 24px;
    font-weight: 600;
    letter-spacing: 1.500px;
}
.drawer-foot .btn-cancel {
    color: #5d8191;
    padding: 0;
    font-size: 23px;
    letter-spacing: 1.200px;
}
.drawer-foot .btn-save {
    width: 137px;
    height: 72px;
    border-radius: 5px;
    background-color: #00b9f5;
    color: #fff;
}

/* edge sidebar */
.rail {
    flex: 1;
    display: flex;
    flex-direction: column;
    align-items: center;
    padding: 2px 2px 3px 0;
    background-color: #f7f7f7;
}
.rail-slot {
    height: 60.400px;
    flex: none;
    display: flex;
    align-items: center;
    justify-content: center;
}
.rail-add {
    transform: translateY(2px);
}
.rail-spacer {
    flex: 1;
}
.rail-divider {
    width: 42px;
    height: 1px;
    background-color: #bcbcbc;
    margin-bottom: 4px;
}

/* taskbar */
.taskbar {
    height: 60px;
    flex: none;
    display: flex;
    align-items: stretch;
    background-image: linear-gradient(to right, #20333f, #20333f 60%, #1c2a40);
    color: #fff;
    font-family: 'Open Sans', sans-serif;
}
.start {
    width: 72px;
    display: flex;
    align-items: center;
    justify-content: center;
}
.search {
    width: 432px;
    position: relative;
    display: flex;
    align-items: center;
    gap: 17px;
    padding-left: 16px;
    background-color: #f0f0f0;
    border: 2px solid #c8c8c8;
    color: #1a1a1a;
    font-size: 21.500px;
    overflow: hidden;
}
.search-art {
    position: absolute;
    right: 0;
    bottom: 0;
}
.taskview {
    width: 78px;
    display: flex;
    align-items: center;
    justify-content: center;
}
.task-apps {
    display: flex;
}
.task-app {
    width: 62.700px;
    position: relative;
    display: flex;
    align-items: center;
    justify-content: center;
}
.task-cog {
    color: #fff;
}
.task-app.current {
    width: 55px;
    background-color: #4a5d68;
    margin-right: 6px;
}
.task-app.running::after, .task-app.current::after {
    content: '';
    position: absolute;
    left: 7px;
    right: 7px;
    bottom: 0;
    height: 3px;
    background-color: #6ab0e8;
}
.task-app.current::after {
    left: 0;
    right: 0;
}
.ws-icon {
    width: 36px;
    height: 36px;
    border-radius: 3px;
    background-color: #fff;
    display: flex;
    flex-direction: column;
    align-items: center;
    justify-content: center;
}
.ws-dots {
    display: flex;
    gap: 2px;
}
.ws-dots i {
    width: 4px;
    height: 4px;
    border-radius: 50%;
    background-color: #e04a3a;
}
.ws-dots i:nth-child(2) {
    background-color: #e8a020;
}
.ws-dots i:nth-child(3) {
    background-color: #5aa83c;
}
.ws-text {
    font-size: 14px;
    line-height: 16px;
    font-weight: 600;
    color: #3a55c8;
}
.tray {
    flex: 1;
    display: flex;
    align-items: center;
    padding-left: 38px;
    font-size: 20px;
}
.weather {
    display: flex;
    align-items: center;
    gap: 13px;
    margin-right: 39px;
}
.tray-up {
    margin-right: 20px;
}
.tray-cam {
    margin-right: 15px;
}
.tray-bat {
    margin-right: 12px;
}
.tray-net {
    margin-right: 13px;
}
.tray-vol {
    margin-right: 18px;
}
.tray-lang {
    font-size: 17px;
    margin-right: 21px;
}
.clock {
    width: 92px;
    display: flex;
    flex-direction: column;
    align-items: center;
    gap: 4px;
    font-size: 17px;
    line-height: 23px;
}
.tray-note {
    margin-left: 29px;
}
```
